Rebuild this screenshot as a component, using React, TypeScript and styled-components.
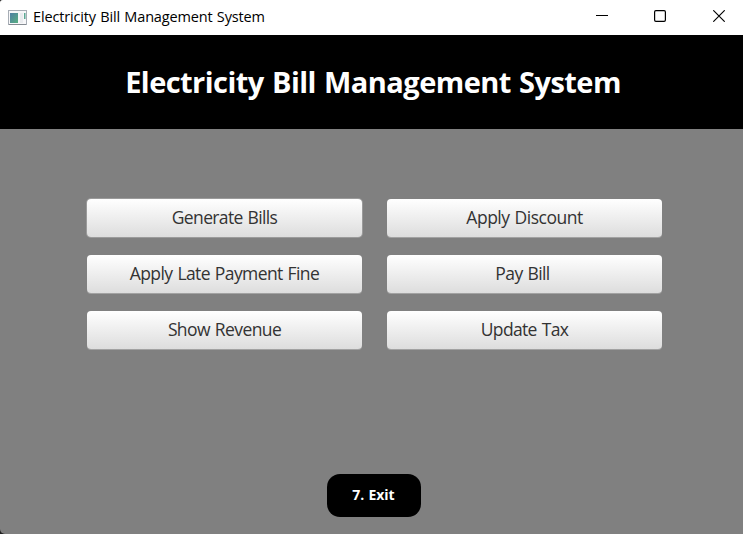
import React from "react";
import styled, { createGlobalStyle } from "styled-components";

const GlobalStyle = createGlobalStyle`
  *, *::before, *::after { box-sizing: border-box; }
  body { margin: 0; background: #202020; overflow: hidden; }
`;

const Window = styled.div`
  width: 743px;
  height: 534px;
  display: flex;
  flex-direction: column;
  overflow: hidden;
  background: #808080;
  border-radius: 3px 0 0 5px;
  font-family: "Open Sans", "Noto Sans", sans-serif;
`;

const TitleBar = styled.div`
  flex: 0 0 35px;
  display: flex;
  align-items: center;
  padding-left: 8px;
  background: #fff;
`;

const WindowTitle = styled.span`
  flex: 1;
  padding: 0 0 1px 6px;
  color: #000;
  font-size: 14.5px;
  line-height: 20px;
  letter-spacing: -0.16px;
  word-spacing: 0.8px;
  white-space: nowrap;
`;

const WindowControls = styled.div`
  display: flex;
  padding: 0 18px 3px 0;

  svg + svg { margin-left: 46px; }
  svg:last-child { margin-left: 47px; }
`;

const Header = styled.header`
  flex: 0 0 94px;
  display: flex;
  align-items: center;
  justify-content: center;
  padding-left: 3px;
  background: #000;
`;

const Heading = styled.h1`
  margin: 0;
  color: #fff;
  font-size: 29px;
  font-weight: 700;
  line-height: 40px;
  letter-spacing: -0.55px;
  word-spacing: 1.3px;
  white-space: nowrap;
`;

const Content = styled.main`
  flex: 1;
  display: flex;
  flex-direction: column;
  align-items: center;
  padding: 70px 0 17px 6px;
`;

const Menu = styled.div`
  display: grid;
  grid-template-columns: 275px 275px;
  column-gap: 25px;
  row-gap: 18px;
`;

const MenuButton = styled.button<{
  $spacing: number;
  $focused?: boolean;
  $inset?: number;
}>`
  height: 38px;
  margin: ${(p) => (p.$focused ? "-0.5px 0 0.5px" : "0")};
  padding: 0 ${(p) => p.$inset ?? 0}px ${(p) => (p.$focused ? 1 : 2)}px 0;
  border: 0;
  border-radius: 4px;
  background: linear-gradient(#fff, #dddddd);
  box-shadow: ${(p) =>
    p.$focused ? "0 0 0 1px #9b9b9b" : "0 1px 0 #a2a2a2"};
  color: #333;
  font: 400 17.5px / 24px "Open Sans", "Noto Sans", sans-serif;
  letter-spacing: ${(p) => p.$spacing}px;
  word-spacing: 1px;
  white-space: nowrap;
`;

const ExitButton = styled.button`
  width: 94px;
  height: 43px;
  margin: auto 2px 0 0;
  padding: 0 0 2px;
  border: 0;
  border-radius: 13px;
  background: #000;
  color: #fff;
  font: 700 14px / 20px "Open Sans", "Noto Sans", sans-serif;
  letter-spacing: 0;
  word-spacing: 0.5px;
`;

const actions = [
  { label: "Generate Bills", spacing: -0.65, focused: true },
  { label: "Apply Discount", spacing: -0.5 },
  { label: "Apply Late Payment Fine", spacing: -0.6 },
  { label: "Pay Bill", spacing: -0.6, inset: 4 },
  { label: "Show Revenue", spacing: -0.6 },
  { label: "Update Tax", spacing: -0.65 },
];

const AppIcon = () => (
  <svg width="19" height="16" viewBox="0 0 19 16">
    <defs>
      <linearGradient id="screen" x2="1" y2="1">
        <stop stopColor="#4f7fa4" />
        <stop offset="1" stopColor="#58af81" />
      </linearGradient>
    </defs>
    <rect x=".5" y=".5" width="18" height="14" fill="#f7f7f9" stroke="#a7adb5" />
    <path d="M1 14.5h17" stroke="#858b92" />
    <rect x="2" y="3" width="8" height="10" fill="url(#screen)" />
    <rect x="12" y="3" width="3" height="10" fill="#e9ebee" />
    <rect x="16" y="3" width="1.5" height="6" fill="#5ca994" />
  </svg>
);

export default function App() {
  return (
    <>
      <GlobalStyle />
      <Window>
        <TitleBar>
          <AppIcon />
          <WindowTitle>Electricity Bill Management System</WindowTitle>
          <WindowControls>
            <svg width="12" height="12" fill="none" stroke="#000">
              <path d="M0 5.5h12" />
            </svg>
            <svg width="12" height="12" fill="none" stroke="#000" strokeWidth="1.2">
              <rect x=".6" y=".6" width="10.8" height="10.8" rx="1.3" />
            </svg>
            <svg width="12" height="12" fill="none" stroke="#000" strokeWidth="1.15">
              <path d="M.3.3l11.4 11.4M11.7.3L.3 11.7" />
            </svg>
          </WindowControls>
        </TitleBar>
        <Header>
          <Heading>Electricity Bill Management System</Heading>
        </Header>
        <Content>
          <Menu>
            {actions.map((a) => (
              <MenuButton
                key={a.label}
                $spacing={a.spacing}
                $focused={a.focused}
                $inset={a.inset}
              >
                {a.label}
              </MenuButton>
            ))}
          </Menu>
          <ExitButton>7. Exit</ExitButton>
        </Content>
      </Window>
    </>
  );
}
